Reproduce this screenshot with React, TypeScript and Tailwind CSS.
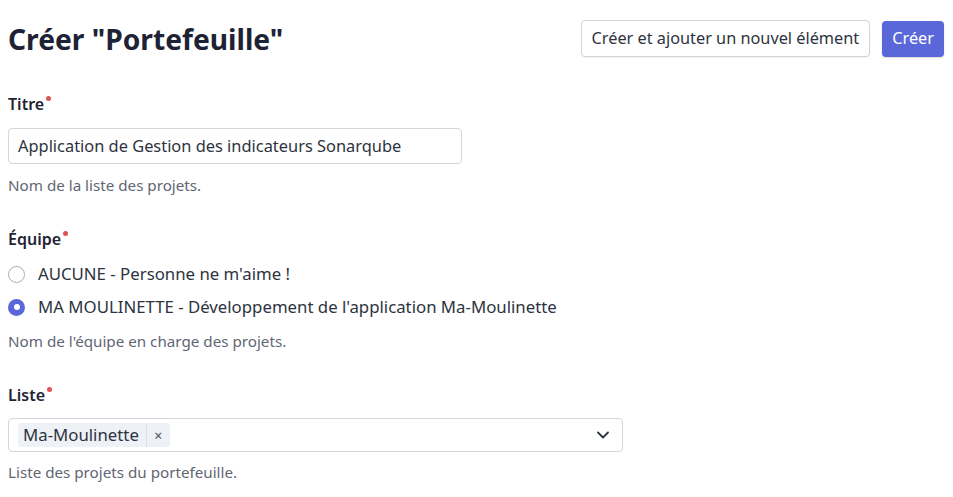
import { ChevronDown } from 'lucide-react';

const font = { fontFamily: '"Noto Sans", "Open Sans", sans-serif' };

function Label({ children }: { children: string }) {
  return (
    <div className="flex h-6 items-center text-[16px] font-semibold leading-6 text-[#1f2433]">
      {children}
      <span className="ml-[2px] -mt-3 h-[5px] w-[5px] rounded-full bg-[#e05252]"></span>
    </div>
  );
}

function Radio({ checked, label }: { checked?: boolean; label: string }) {
  return (
    <label className="flex h-6 items-center gap-[13px] text-[16.8px] text-[#2d3340]">
      {checked ? (
        <span className="flex h-[17px] w-[17px] items-center justify-center rounded-full bg-[#5a67d8]">
          <span className="h-[6px] w-[6px] rounded-full bg-white"></span>
        </span>
      ) : (
        <span className="h-[17px] w-[17px] rounded-full border border-[#a8adb5] bg-white"></span>
      )}
      {label}
    </label>
  );
}

export default function App() {
  return (
    <div className="h-[497px] w-[953px] bg-white" style={font}>
      {/* Header */}
      <div className="flex items-center justify-between pl-2 pr-[9px] pt-5">
        <h1 className="text-[28.2px] font-bold leading-9 text-[#1e2235]">Créer "Portefeuille"</h1>
        <div className="flex items-center gap-3">
          <button className="h-[37px] rounded-[4px] border border-[#cfd4db] bg-white px-[10px] text-[16.3px] text-[#2d3340] shadow-[0_1px_1px_rgba(0,0,0,0.04)]">
            Créer et ajouter un nouvel élément
          </button>
          <button className="h-[36px] rounded-[4px] bg-[#5a67d8] px-[10px] text-[16.3px] text-white shadow-[0_1px_2px_rgba(0,0,0,0.15)]">
            Créer
          </button>
        </div>
      </div>

      <div className="flex flex-col pl-2">
        {/* Titre */}
        <div className="mt-[35px]">
          <Label>Titre</Label>
        </div>
        <div className="mt-3 flex h-9 w-[454px] items-center rounded-[4px] border border-[#d4d8de] px-[9px] text-[16.4px] text-[#2d3340]">
          Application de Gestion des indicateurs Sonarqube
        </div>
        <p className="mt-[11px] text-[15.2px] leading-5 text-[#5f6673]">Nom de la liste des projets.</p>

        {/* Équipe */}
        <div className="mt-8">
          <Label>Équipe</Label>
        </div>
        <div className="mt-[11px] flex flex-col gap-[9px]">
          <Radio label="AUCUNE - Personne ne m'aime !" />
          <Radio checked label="MA MOULINETTE - Développement de l'application Ma-Moulinette" />
        </div>
        <p className="mt-3 text-[15.2px] leading-5 text-[#5f6673]">Nom de l'équipe en charge des projets.</p>

        {/* Liste */}
        <div className="mt-8">
          <Label>Liste</Label>
        </div>
        <div className="mt-[11px] flex h-[34px] w-[615px] items-center justify-between rounded-[4px] border border-[#d4d8de] pl-[9px] pr-[9px]">
          <div className="flex h-6 items-center rounded-[3px] bg-[#eef1f6] text-[#2d3340]">
            <span className="pl-[5px] pr-[7px] text-[16.8px]">Ma-Moulinette</span>
            <span className="flex h-full w-[24px] items-center justify-center border-l border-[#dde1e7] text-[14px] text-[#4b5160]">×</span>
          </div>
          <ChevronDown size={20} strokeWidth={2.2} className="text-[#2d3340]" />
        </div>
        <p className="mt-[10px] text-[15.2px] leading-5 text-[#5f6673]">Liste des projets du portefeuille.</p>
      </div>
    </div>
  );
}
